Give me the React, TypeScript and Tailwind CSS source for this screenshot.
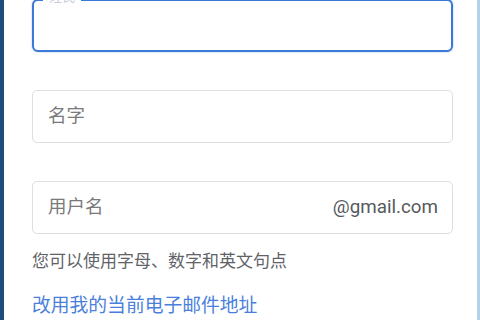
import React from "react";

export default function App() {
  return (
    <div
      className="w-[480px] h-[320px] overflow-hidden flex bg-white"
      style={{ fontFamily: 'Roboto, "Noto Sans CJK SC", sans-serif' }}
    >
      <div className="w-[4px] h-full bg-[#1c4d7b]" />
      <div className="flex-1 flex flex-col pl-[28px]">
        <div className="w-[421px] flex flex-col">
          {/* focused field */}
          <div className="relative mt-[-1px] h-[53px] rounded-[6px] border-2 border-[#3b79d6] bg-white shadow-[0_0_2px_rgba(59,121,214,0.5)]">
            <span className="absolute left-[9px] top-[-12px] px-[6px] bg-white text-[13px] leading-[15px] text-[#c7cdd6]">
              姓氏
            </span>
          </div>
          {/* name */}
          <div className="mt-[38px] h-[53px] rounded-[5px] border border-[#dcdfe3] flex items-center px-[15px]">
            <span className="text-[18.5px] text-[#7a7a7a]">名字</span>
          </div>
          {/* username */}
          <div className="mt-[38px] h-[53px] rounded-[5px] border border-[#dcdfe3] flex items-center justify-between pl-[15px] pr-[14px]">
            <span className="text-[18.5px] text-[#7a7a7a]">用户名</span>
            <span className="text-[18.8px] text-[#555a60]">@gmail.com</span>
          </div>
          <div className="mt-[15px] text-[17px] leading-[24px] text-[#5f6368]">
            您可以使用字母、数字和英文句点
          </div>
          <div className="mt-[21px] text-[18.8px] leading-[24px] text-[#4a7fdc]">
            改用我的当前电子邮件地址
          </div>
        </div>
      </div>
      <div className="w-[3px] h-full bg-[#b5d0ea]" />
    </div>
  );
}
